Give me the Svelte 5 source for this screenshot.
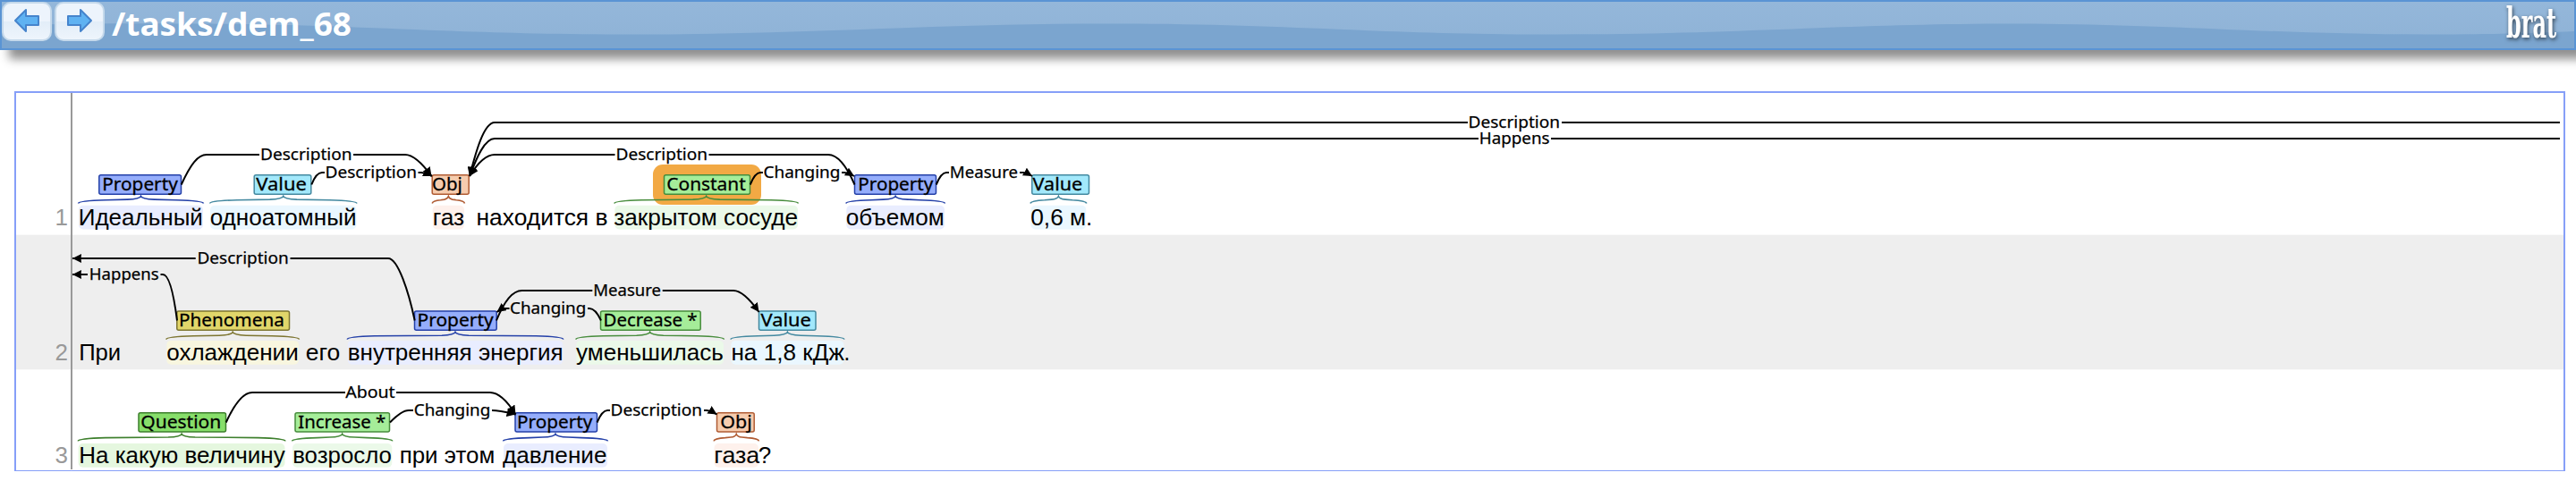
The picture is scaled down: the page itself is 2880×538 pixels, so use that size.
<script>
  // Sentence fragments: [text, inkStart, inkEnd]
  // Spans: [label, boxStart, boxEnd, inkStart, inkEnd, highlightStart, highlightEnd, kind]
  const rows = [
    {
      n: 1, base: 252, hl: 229.7, tag: 195.8, tagBase: 213,
      words: [
        ['Идеальный', 89, 225.7], ['одноатомный', 236, 397.3], ['газ', 485, 518],
        ['находится в', 533.8, 678.3], ['закрытом сосуде', 687.5, 891], ['объемом', 947, 1054.5],
        ['0,6 м', 1153.5, 1213], ['.', 1215.7, 1219.5]
      ],
      spans: [
        ['Property', 110.3, 203, 116, 198, 88, 227, 'prop'], ['Value', 283.7, 348.3, 288, 342, 235, 398.5, 'val'],
        ['Obj', 482.7, 524.7, 484.7, 516, 483.7, 519, 'obj'], ['Constant', 742, 839, 747, 833, 687.3, 892, 'chg'],
        ['Property', 955, 1047, 961, 1042.5, 946.3, 1056, 'prop'], ['Value', 1153.3, 1218, 1156.3, 1209.5, 1152.5, 1214.3, 'val']
      ]
    },
    {
      n: 2, base: 403, hl: 380.9, tag: 347.9, tagBase: 365,
      words: [
        ['При', 89.5, 134], ['охлаждении', 187.5, 332.5], ['его', 343, 379], ['внутренняя энергия', 390, 628.4],
        ['уменьшилась', 645.3, 807.7], ['на 1,8 кДж', 818.7, 942.7], ['.', 945, 949]
      ],
      spans: [
        ['Phenomena', 197.3, 324, 201.7, 317, 186.3, 334, 'phen'], ['Property', 463, 555.7, 468.3, 550.8, 388.7, 629.3, 'prop'],
        ['Decrease *', 671, 783.7, 676.3, 778.8, 644.3, 809, 'chg'], ['Value', 848, 912.5, 852.2, 906, 817.4, 943.4, 'val']
      ]
    },
    {
      n: 3, base: 517.7, hl: 496, tag: 461.7, tagBase: 479,
      words: [
        ['На какую величину', 89.5, 317.5], ['возросло', 328.5, 436.7], ['при этом', 448, 552],
        ['давление', 563.3, 677.3], ['газа', 799.5, 848], ['?', 849.5, 861]
      ],
      spans: [
        ['Question', 154.5, 253, 159, 246.5, 87.7, 318.5, 'ques'], ['Increase *', 329.5, 436, 335, 430.5, 327, 438.3, 'chg'],
        ['Property', 575.5, 668, 579.7, 661.5, 563, 679, 'prop'], ['Obj', 801, 843.7, 807, 840, 798.5, 848, 'obj']
      ]
    }
  ];

  // Arc lines: [path, start marker, end marker]
  const arcs = [
    ['M202.7 206.5C213 184 221 173 231 173H290', 0, 0], ['M395 173H453C463 173 473 184 482.5 197', 0, 1],
    ['M348.3 206.5C352 197 356 193 360 193H363', 0, 0], ['M467.5 193H471Q476 193.5 483 197', 0, 1],
    ['M525 197C532 170 541 137 553 137H555', 1, 0], ['M525 197C533 176 542 155 553 155H555', 1, 0],
    ['M525 197C533 184 542 173 553 173H687.5', 1, 0], ['M792.5 173H926C937 173 947 187 955.5 206.5', 0, 0],
    ['M838.7 206.5C843 196 847 193 850 193H853', 0, 0], ['M941 193H944Q949 193.5 955 197', 0, 1],
    ['M1046.7 206.5C1051 196 1055 193 1058 193H1061', 0, 0], ['M1140 193H1144Q1148 193.5 1154 197', 0, 1],
    ['M81 289H218.7', 1, 0], ['M324.5 289H434C445 289 457 327 463.7 358.5', 0, 0],
    ['M81 307H98', 1, 0], ['M179.5 307H182C190 307 195 335 198 358.5', 0, 0],
    ['M555 358.5C564 336 573 325 583.5 325H662.3', 0, 0], ['M740.7 325H820C830 325 840 337 848.5 349', 0, 1],
    ['M555.5 349Q561 345 565 345H569.5', 1, 0], ['M657 345H659C663 345 668 350 672 358.5', 0, 0],
    ['M252.7 472.5C263 450 272 439 282 439H386', 0, 0], ['M443 439H548C558 439 568 450 576.5 463.5', 0, 1],
    ['M436 472.5Q449 459 457 459H462', 0, 0], ['M550 459C558 459 566 461 576.5 463.5', 0, 1],
    ['M667.5 472.5C672 462 676 459 679 459H682', 0, 0], ['M787 459H790Q795 459.5 801.5 463.5', 0, 1]
  ];

  // Long straight runs: [x1, x2, y]
  const runs = [[553, 1641, 137], [1746, 2862, 137], [553, 1653, 155], [1734, 2862, 155]];

  const arcLabels = [
    ['Description', 292.5, 392.5, 179], ['Description', 365, 465, 199], ['Description', 1643, 1743, 143],
    ['Happens', 1655.3, 1731.5, 161], ['Description', 690, 790, 179], ['Changing', 855, 938.5, 199],
    ['Measure', 1063.3, 1137, 199], ['Description', 222, 321.7, 295], ['Happens', 101.3, 176.7, 313],
    ['Measure', 664.7, 738, 331], ['Changing', 571.5, 654.3, 351], ['About', 387.7, 440.7, 445],
    ['Changing', 464.3, 547.3, 465], ['Description', 684, 784, 465]
  ];

  function brace(a, b, y) {
    const m = (a + b) / 2;
    const q = Math.min(30, (b - a) / 4);
    return `M${a - 0.5} ${y + 8}Q${a} ${y + 5} ${a + q} ${y + 4.2}L${m - q * 0.5} ${y + 3.6}Q${m - 1} ${y + 3} ${m} ${y}` +
      `Q${m + 1} ${y + 3} ${m + q * 0.5} ${y + 3.6}L${b - q} ${y + 4.2}Q${b} ${y + 5} ${b + 0.5} ${y + 8}`;
  }
</script>

<div class="page">
  <header>
    <svg class="gloss" viewBox="0 0 2876 52" preserveAspectRatio="none" aria-hidden="true">
      <path d="M0 27C70 24 130 24 210 24.500C400 25 500 36.500 704 36.500C900 36.500 1040 24.500 1240 24.500C1430 24.500 1540 36.500 1740 36.500C1940 36.500 2060 24.500 2250 24.500C2420 24.500 2540 36.500 2710 36.500C2780 36.500 2830 35 2876 33V52H0Z" />
    </svg>
    <nav>
      <button aria-label="Previous">
        <svg width="30" height="28" viewBox="0 0 30 28"><path d="M2 14L14 2V9H28V19H14V26Z" /></svg>
      </button>
      <button aria-label="Next">
        <svg width="30" height="28" viewBox="0 0 30 28"><path d="M28 14L16 2V9H2V19H16V26Z" /></svg>
      </button>
    </nav>
    <svg class="title" width="280" height="52">
      <text x="4" y="38" textLength="268" lengthAdjust="spacingAndGlyphs">/tasks/dem_68</text>
    </svg>
    <svg class="logo" width="66" height="52">
      <text x="5" y="40" textLength="56" lengthAdjust="spacingAndGlyphs">brat</text>
    </svg>
  </header>

  <main>
    <svg width="2848" height="422" viewBox="18 104 2848 422">
      <defs>
        <marker id="arrow" markerWidth="5" markerHeight="5" refX="5" refY="2.5" orient="auto-start-reverse">
          <path d="M0 0L5 2.500L0 5L.2 2.500Z" />
        </marker>
      </defs>
      <rect x="18" y="262.700" width="2848" height="150.600" fill="#eee" />
      <path d="M80 104V525" stroke="#999" stroke-width="2" />
      <rect x="730" y="184" width="121" height="45" rx="11" fill="#f2a944" />
      {#each rows as r}
        <text class="num" x="76" y={r.base}>{r.n}</text>
        {#each r.spans as s}
          <g class={s[7]}>
            <rect class="hl" x={s[5]} y={r.hl} width={s[6] - s[5]} height="26.800" rx="5" />
            <path class="brace" d={brace(s[5], s[6], r.tag + 23.7)} />
            <rect class="tag" x={s[1] + 0.5} y={r.tag} width={s[2] - s[1] - 1} height="21.400" rx="2" />
            <text class="name" x={s[3] - 1.7} y={r.tagBase} textLength={s[4] - s[3] + 2.5} lengthAdjust="spacingAndGlyphs">{s[0]}</text>
          </g>
        {/each}
        {#each r.words as w}
          {#if w[0].length > 1}
            <text class="word" x={w[1] - 1.3} y={r.base} textLength={w[2] - w[1] + 2.5} lengthAdjust="spacingAndGlyphs">{w[0]}</text>
          {:else}
            <text class="word" x={w[1] - 1.7} y={r.base}>{w[0]}</text>
          {/if}
        {/each}
      {/each}
      {#each arcs as a}
        <path class="arc" d={a[0]} marker-start={a[1] ? 'url(#arrow)' : null} marker-end={a[2] ? 'url(#arrow)' : null} />
      {/each}
      {#each runs as l}
        <rect x={l[0]} y={l[2] - 1} width={l[1] - l[0]} height="2" shape-rendering="crispEdges" />
      {/each}
      {#each arcLabels as l}
        <text class="rel" x={l[1] - 1.5} y={l[3]} textLength={l[2] - l[1] + 2.5} lengthAdjust="spacingAndGlyphs">{l[0]}</text>
      {/each}
    </svg>
  </main>
</div>

<style>
  :global(body) { margin: 0; background: #fff; overflow: hidden; }
  .page { width: 2880px; height: 538px; overflow: hidden; }
  header {
    position: relative; display: flex; align-items: flex-start; box-sizing: border-box;
    width: 2880px; height: 56px; border: 2px solid #5a94d4;
    background: linear-gradient(#94b7da, #8eb2d6);
    box-shadow: 10px 10px 10px #909090;
  }
  .gloss { position: absolute; inset: 0; width: 100%; height: 100%; }
  .gloss path { fill: #7ba5cf; }
  nav { position: relative; display: flex; gap: 3px; }
  button {
    display: flex; align-items: flex-start; justify-content: center; box-sizing: border-box;
    width: 56px; height: 44px; padding: 5px 0 0; border: 2px solid #c5d9eb; border-radius: 10px;
    background: linear-gradient(#edf4fc 0 50%, #e2edf8 50%, #eef5fc);
  }
  button path { fill: #5fb2f2; stroke: #4684cc; stroke-width: 2; stroke-linejoin: round; }
  .title { position: relative; margin-left: 4px; overflow: visible; }
  .title text { font: bold 36px "Noto Sans", "Open Sans", sans-serif; fill: #fff; }
  .logo { position: relative; margin-left: auto; margin-right: 15px; overflow: visible; }
  .logo text { font: bold 46px "DejaVu Serif Condensed", "DejaVu Serif", serif; fill: #fff; filter: drop-shadow(1px 2px 2px #345); }
  main {
    box-sizing: border-box; width: 2852px; height: 425px; margin: 46px 12px 0 16px;
    border: 2px solid #869ff8; border-bottom-width: 1px;
  }
  main svg { display: block; }
  .word, .num { font: 26px "Liberation Sans", Arial, sans-serif; }
  .num { fill: #999; text-anchor: end; }
  .name { font: 20px "Noto Sans", "Open Sans", sans-serif; stroke: #000; stroke-width: .3px; }
  .rel { font: 18px "Noto Sans", "Open Sans", sans-serif; stroke: #000; stroke-width: .25px; }
  .arc { fill: none; stroke: #000; stroke-width: 2; }
  .brace { fill: none; stroke-width: 1.6; }
  .tag { stroke-width: 1.5; }
  .prop .hl { fill: #e9edff; }
  .prop .tag { fill: #95adfb; stroke: #2440a8; }
  .prop .brace { stroke: #2440a8; }
  .val .hl { fill: #eaf7ff; }
  .val .tag { fill: #a2e8fb; stroke: #4489a0; }
  .val .brace { stroke: #4489a0; }
  .obj .hl { fill: #fef1ec; }
  .obj .tag { fill: #f6ccae; stroke: #b05c34; }
  .obj .brace { stroke: #b05c34; }
  .chg .hl { fill: #ebf9e9; }
  .chg .tag { fill: #a5ed99; stroke: #478c3c; }
  .chg .brace { stroke: #478c3c; }
  .phen .hl { fill: #f8f6df; }
  .phen .tag { fill: #e1d66a; stroke: #7d7531; }
  .phen .brace { stroke: #7d7531; }
  .ques .hl { fill: #e5f7df; }
  .ques .tag { fill: #87de6a; stroke: #3d7f2c; }
  .ques .brace { stroke: #3d7f2c; }
</style>
